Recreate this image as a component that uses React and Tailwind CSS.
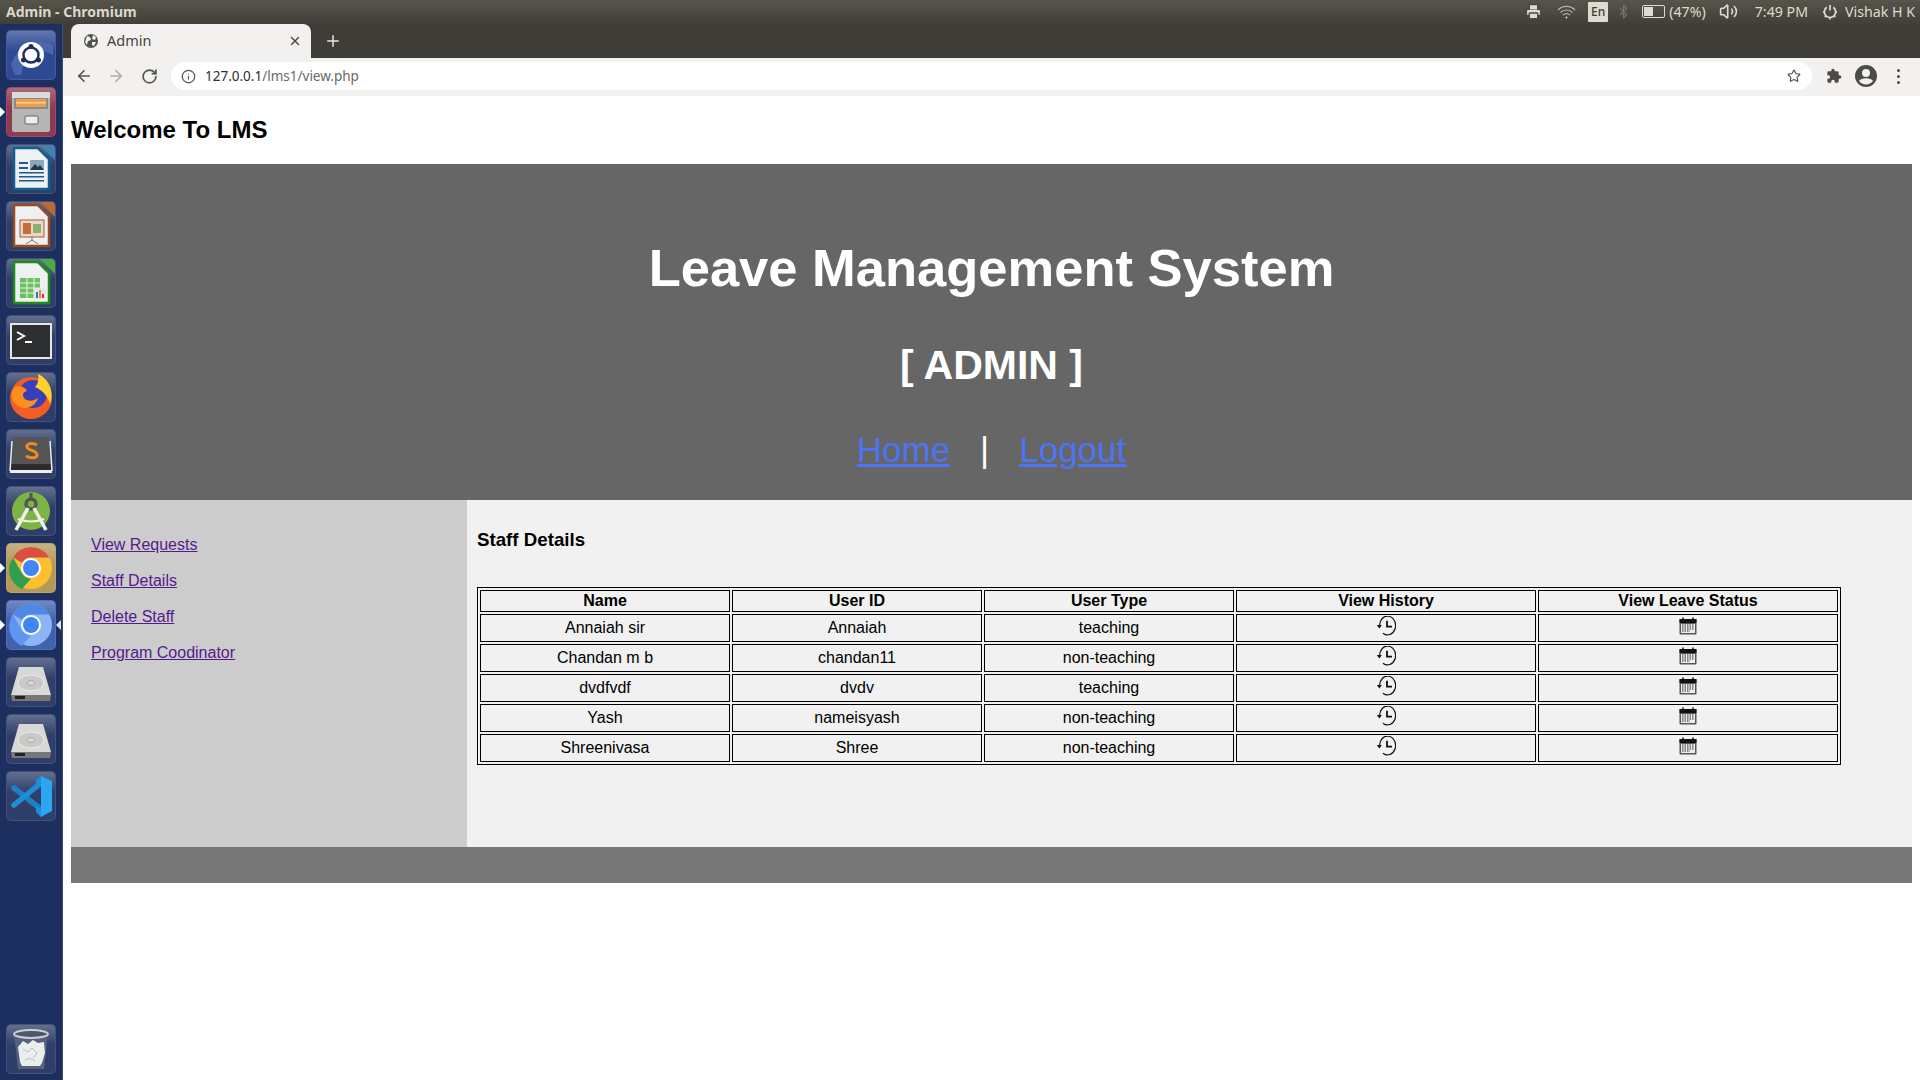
import React from 'react';
import { ArrowLeft, ArrowRight, RotateCw, Info, Star, X, Plus, Printer, Bluetooth, Volume2 } from 'lucide-react';

const SANS = 'font-["Liberation_Sans",Arial,sans-serif]';
const UI = 'font-["Noto_Sans",sans-serif]';

const STAFF = [
  { name: 'Annaiah sir', id: 'Annaiah', type: 'teaching' },
  { name: 'Chandan m b', id: 'chandan11', type: 'non-teaching' },
  { name: 'dvdfvdf', id: 'dvdv', type: 'teaching' },
  { name: 'Yash', id: 'nameisyash', type: 'non-teaching' },
  { name: 'Shreenivasa', id: 'Shree', type: 'non-teaching' }
];

const SIDE_LINKS = ['View Requests', 'Staff Details', 'Delete Staff', 'Program Coodinator'];

const Tile = ({ bg = 'bg-[#2f3f69]', marker, children }) => (
  <div className="relative w-full h-[50px] flex justify-center">
    {marker && <div className="absolute left-0 top-[20px] w-0 h-0 border-y-[5px] border-y-transparent border-l-[5px] border-l-white" />}
    {marker === 'both' && <div className="absolute right-[1px] top-[20px] w-0 h-0 border-y-[5px] border-y-transparent border-r-[5px] border-r-[#dfe3ec]" />}
    <div className={`relative w-[50px] h-[50px] rounded-[5px] border border-white/10 overflow-hidden ${bg}`}>
      <div className="absolute inset-x-0 top-0 h-[20px] bg-gradient-to-b from-white/25 to-transparent" />
      <svg width="48" height="48" viewBox="0 0 48 48" className="relative">{children}</svg>
    </div>
  </div>
);

const Disk = () => (
  <>
    <path d="M12 9h24l8 28H4z" fill="#d8d8d6" />
    <ellipse cx="24" cy="25" rx="13" ry="8" fill="#c9c9c7" stroke="#ecece9" />
    <ellipse cx="24" cy="25" rx="4" ry="2.500" fill="#d8d8d6" stroke="#aaa" />
    <path d="M4 37h40l-1 6H5z" fill="#77777a" />
    <path d="M8 38h10v3H8z" fill="#222" />
  </>
);

const Launcher = () => (
  <div className="w-[63px] shrink-0 bg-[#1c2f5e] border-r border-[#3a4a72] flex flex-col gap-[7px] pt-[6px] pb-[6px]">
    <Tile bg="bg-[#2f4a94]">
      <path d="M4 34C12 10 32 6 46 14v10C32 16 18 22 14 44H8z" fill="#4a66ad" />
      <circle cx="24" cy="24" r="13" fill="#fff" />
      <circle cx="24" cy="24" r="7.500" fill="none" stroke="#1f2f66" strokeWidth="2.500" />
      <circle cx="24" cy="15.500" r="2.500" fill="#1f2f66" />
      <circle cx="16.500" cy="29" r="2.500" fill="#1f2f66" />
      <circle cx="31.500" cy="29" r="2.500" fill="#1f2f66" />
    </Tile>
    <Tile bg="bg-[#8c3b50]" marker="left">
      <path d="M5 4h38v38a2 2 0 0 1-2 2H7a2 2 0 0 1-2-2z" fill="#b5b5b3" />
      <path d="M5 4h38v6H5z" fill="#dcdcdc" />
      <path d="M7 10h34v11H7z" fill="#8a8a88" />
      <path d="M9 11h30v8H9z" fill="#ee9b4c" />
      <path d="M9 14h30v1.500H9z" fill="#f8d49a" />
      <rect x="18" y="28" width="13" height="8" rx="1" fill="#eee" stroke="#666" />
    </Tile>
    <Tile>
      <path d="M7 3h24l11 11v30H7z" fill="#eef0f2" stroke="#10608f" strokeWidth="2.500" />
      <path d="M33 0h15v15z" fill="#3f83b5" />
      <path d="M12 17h9v2h-9zM12 22h9v2h-9zM12 27h25v1.500H12zM12 31h25v1.500H12zM12 35h25v1.500H12z" fill="#1b5c88" />
      <path d="M23 15h14v10H23z" fill="#8aa7bb" />
      <path d="M23 25l5-6 3 3 2-2 4 5z" fill="#26394a" />
    </Tile>
    <Tile>
      <path d="M7 3h24l11 11v30H7z" fill="#eef0f2" stroke="#9a4a1c" strokeWidth="2.500" />
      <path d="M33 0h15v15z" fill="#b96a38" />
      <rect x="13" y="18" width="24" height="17" fill="#e6d9cf" stroke="#b5562a" />
      <path d="M16 21h8v11h-8z" fill="#c86a3a" />
      <path d="M26 22h8v9h-8z" fill="#8fb06a" />
      <path d="M25 35v3l-6 4M25 38l6 4" stroke="#777" fill="none" />
    </Tile>
    <Tile>
      <path d="M7 3h24l11 11v30H7z" fill="#eef0f2" stroke="#1e8c14" strokeWidth="2.500" />
      <path d="M33 0h15v15z" fill="#4caa45" />
      <rect x="13" y="19" width="20" height="20" fill="#6cc060" />
      <path d="M13 24h20M13 29h20M13 34h20M20 19v20M27 19v20" stroke="#e9f5e6" />
      <rect x="27" y="29" width="12" height="11" fill="#e4e6ea" />
      <path d="M29 33h2v6h-2z" fill="#2f77b5" /><path d="M32 31h2v8h-2z" fill="#e58a2a" /><path d="M35 35h2v4h-2z" fill="#c33" />
    </Tile>
    <Tile>
      <rect x="3" y="7" width="42" height="36" fill="#e6e6e6" />
      <rect x="5" y="9" width="38" height="32" fill="#2e2f30" />
      <path d="M10 16l7 4-7 4" fill="none" stroke="#fff" strokeWidth="2" />
      <path d="M18 26h7" stroke="#fff" strokeWidth="2" />
    </Tile>
    <Tile>
      <circle cx="24" cy="25" r="21" fill="#f25c27" />
      <circle cx="26" cy="21" r="14" fill="#3b3fb6" />
      <path d="M31 1c13 6 16 20 12 30-3-9-8-14-15-17 3-3 4-8 3-13z" fill="#ffcf2e" />
      <path d="M8 14c5-2 10 0 12 4-4 1-5 4-3 7 3 4 10 3 14 0-2 8-12 13-20 8S3 20 8 14z" fill="#ff8f1f" />
    </Tile>
    <Tile>
      <path d="M7 7h34l3 27H4z" fill="#555" />
      <path d="M4 34h40v6H4z" fill="#2c2c2c" />
      <path d="M3 40h42v3H3z" fill="#eee" />
      <path d="M43 11l2 30M5 11L3 41" stroke="#eee" strokeWidth="1.500" />
      <path d="M30 15c-5-3-11-1-10 2 1 4 10 3 10 8 0 3-6 4-11 1" fill="none" stroke="#f58a1f" strokeWidth="3" />
    </Tile>
    <Tile>
      <circle cx="24" cy="24" r="19" fill="#7db545" />
      <circle cx="24" cy="17" r="5" fill="none" stroke="#555" strokeWidth="3.500" />
      <path d="M24 6v6" stroke="#555" strokeWidth="3" />
      <path d="M21 21L9 43M27 21l12 22" stroke="#eef0ea" strokeWidth="3.500" />
      <path d="M11 32c8 3 18 3 26 0" stroke="#eef0ea" strokeWidth="2" fill="none" />
    </Tile>
    <Tile bg="bg-[#b19a5c]" marker="left">
      <circle cx="24" cy="24" r="21" fill="#fbc02d" />
      <path d="M24 3a21 21 0 0 1 18.200 10.500H24a10.500 10.500 0 0 0-9.100 5.300L6 13.500A21 21 0 0 1 24 3z" fill="#d94f42" />
      <path d="M6 13.500l9 15.700a10.500 10.500 0 0 0 9 5.300L15 45A21 21 0 0 1 6 13.500z" fill="#2f9e4f" />
      <circle cx="24" cy="24" r="10" fill="#fff" />
      <circle cx="24" cy="24" r="8" fill="#4285f4" />
    </Tile>
    <Tile bg="bg-[#3f62ae]" marker="both">
      <circle cx="24" cy="24" r="21" fill="#8db4f5" />
      <path d="M24 3a21 21 0 0 1 18.200 10.500H24a10.500 10.500 0 0 0-9.100 5.300L6 13.500A21 21 0 0 1 24 3z" fill="#4f87e8" />
      <path d="M6 13.500l9 15.700a10.500 10.500 0 0 0 9 5.300L15 45A21 21 0 0 1 6 13.500z" fill="#5f95ee" />
      <circle cx="24" cy="24" r="10" fill="#fff" />
      <circle cx="24" cy="24" r="8" fill="#4285f4" />
    </Tile>
    <Tile><Disk /></Tile>
    <Tile><Disk /></Tile>
    <Tile>
      <path d="M7 16l28 22" stroke="#1f7fc4" strokeWidth="5.500" strokeLinecap="round" />
      <path d="M7 33L35 10" stroke="#1f8ed8" strokeWidth="5.500" strokeLinecap="round" />
      <path d="M34 4l11 5v30l-11 6z" fill="#2aa7f0" />
      <path d="M34 4l-5 4v6l5-3zM34 37l-5-3v6l5 5z" fill="#1f8ed8" />
    </Tile>
    <div className="mt-auto">
      <Tile>
        <path d="M7 9h34l-4 35H11z" fill="#55617f" />
        <ellipse cx="24" cy="9" rx="17" ry="4" fill="#4b5670" stroke="#cfcfcf" strokeWidth="2" />
        <path d="M11 22l5-6 5 3 5-4 5 3 6-1 1 11-3 10-2 3H15l-2-4z" fill="#eceded" />
        <path d="M16 24l5 3 4-4 5 5-4 5M18 35l5-2 5 3" fill="none" stroke="#b9bcc2" />
      </Tile>
    </div>
  </div>
);

const TopPanel = () => (
  <div className={`h-[24px] shrink-0 bg-gradient-to-b from-[#57544a] to-[#403f39] flex items-center justify-between pl-[6px] pr-[5px] pb-[1px] text-[14.200px] ${UI}`}>
    <span className="font-bold text-[14px] text-[#dcd7cc]">Admin - Chromium</span>
    <div className="flex items-center text-[#dfdbd2] h-full whitespace-nowrap">
      <Printer size={17} className="fill-[#dfdbd2] stroke-[#4a4841]" />
      <svg width="19" height="14" viewBox="0 0 19 14" fill="none" stroke="#b9b5ac" strokeWidth="1.200" className="ml-[15px]">
        <path d="M1 5a12 12 0 0 1 17 0M3.500 7.500a8.500 8.500 0 0 1 12 0M6 10a5 5 0 0 1 7 0" />
        <circle cx="9.500" cy="12.500" r="1" fill="#dfdbd2" stroke="none" />
      </svg>
      <span className="ml-[12px] w-[20px] h-[20px] bg-[#dfdbd2] rounded-[1px] text-[#3c3b37] text-[12px] flex items-center justify-center font-medium">En</span>
      <Bluetooth size={15} className="ml-[8px] text-[#77756d]" />
      <span className="ml-[11px] w-[23px] h-[13px] border border-[#dfdbd2] rounded-[2px] flex items-stretch p-[1px]">
        <span className="w-[9px] bg-[#dfdbd2]" />
      </span>
      <span className="ml-[4px]">(47%)</span>
      <Volume2 size={19} className="ml-[13px]" />
      <span className="ml-[17px]">7:49 PM</span>
      <svg width="16" height="16" viewBox="0 0 17 17" className="ml-[14px]" fill="none" stroke="#dfdbd2" strokeWidth="1.800">
        <path d="M8.500 1v6" />
        <path d="M5 3.500a6 6 0 1 0 7 0" />
        <path d="M1 8.500h2M14 8.500h2M3 14l1.500-1.500M14 14l-1.500-1.500M8.500 14.500v2" />
      </svg>
      <span className="ml-[7px]">Vishak H K</span>
    </div>
  </div>
);

const BrowserChrome = () => (
  <div className={`shrink-0 ${UI}`}>
    <div className="h-[34px] bg-[#3e3d37] flex items-end pl-[8px]">
      <div className="w-[240px] h-[34px] bg-[#f2f1f0] rounded-t-[8px] flex items-center pl-[12px] pr-[9px] text-[#45433f] text-[14.500px]">
        <svg width="16" height="16" viewBox="0 0 16 16">
          <circle cx="8" cy="8" r="7" fill="#55534f" />
          <path d="M4 3l3 1 1 3-3 1-1 4-2-3zM10 2l3 2-1 3-3-1zM9 9l4 0-2 4-2-1z" fill="#f2f1f0" />
        </svg>
        <span className="ml-[8px]">Admin</span>
        <X size={14} strokeWidth={2.500} className="ml-auto text-[#4a4845]" />
      </div>
      <Plus size={18} strokeWidth={2} className="ml-[13px] mb-[8px] text-[#e8e6e1]" />
    </div>
    <div className="h-[38px] bg-[#f2f1f0] flex items-center pl-[12px] pr-[20px] pb-[2px]">
      <ArrowLeft size={18} strokeWidth={2.200} className="text-[#55534f]" />
      <ArrowRight size={18} strokeWidth={2.200} className="text-[#adacaa] ml-[14px]" />
      <RotateCw size={17} strokeWidth={2.400} className="text-[#55534f] ml-[16px]" />
      <div className="ml-[13px] flex-1 h-[28px] bg-white rounded-full flex items-center pl-[10px] pr-[11px] text-[13.500px]">
        <Info size={15} className="text-[#55534f]" />
        <span className="ml-[9px] text-[#2f2e2b]">127.0.0.1<span className="text-[#6b6966]">/lms1/view.php</span></span>
        <Star size={14} className="ml-auto text-[#55534f]" />
      </div>
      <svg width="16" height="16" viewBox="0 0 24 24" fill="#4d4b47" className="ml-[14px]">
        <path d="M20.500 11H19V7a2 2 0 0 0-2-2h-4V3.500a2.500 2.500 0 0 0-5 0V5H4a2 2 0 0 0-2 2v3.800h1.500a2.700 2.700 0 0 1 0 5.400H2V20a2 2 0 0 0 2 2h3.800v-1.500a2.700 2.700 0 0 1 5.400 0V22H17a2 2 0 0 0 2-2v-4h1.500a2.500 2.500 0 0 0 0-5z" />
      </svg>
      <svg width="24" height="24" viewBox="0 0 24 24" fill="#4d4b47" className="ml-[12px]">
        <path d="M12 1a11 11 0 1 0 0 22 11 11 0 0 0 0-22zm0 4a4 4 0 1 1 0 8 4 4 0 0 1 0-8zm0 15.500a8.800 8.800 0 0 1-7-3.500c.8-1.800 4.200-2.800 7-2.800s6.200 1 7 2.800a8.800 8.800 0 0 1-7 3.500z" />
      </svg>
      <div className="ml-[19px] flex flex-col gap-[3px]">
        <span className="w-[3px] h-[3px] rounded-full bg-[#4d4b47]" />
        <span className="w-[3px] h-[3px] rounded-full bg-[#4d4b47]" />
        <span className="w-[3px] h-[3px] rounded-full bg-[#4d4b47]" />
      </div>
    </div>
  </div>
);

const HistoryIcon = () => (
  <svg width="20" height="20" viewBox="0 0 20 20" fill="none" stroke="#111" strokeWidth="1.200" className="mx-auto block">
    <path d="M3.600 10A8 9.400 0 1 1 7 17.200" />
    <path d="M0.800 9h5L3.400 12.500z" fill="#111" stroke="none" />
    <path d="M11 4.700v6h5" strokeWidth="1.800" />
  </svg>
);

const CalendarIcon = () => (
  <svg width="18" height="18" viewBox="0 0 18 18" className="mx-auto block">
    <rect x="0.500" y="2" width="17" height="15.500" rx="1" fill="#555" />
    <rect x="0.500" y="2" width="17" height="4" fill="#111" />
    <path d="M4 0.500v3M14 0.500v3" stroke="#111" strokeWidth="1.500" />
    <rect x="2" y="7" width="14" height="9" fill="#eee" />
    <path d="M3 8h12M3 10h12M3 12h12M3 14h8" stroke="#222" strokeWidth="1" strokeDasharray="1.500 1" />
  </svg>
);

const cell = 'border border-black p-[1px] text-center leading-[18px]';

const StaffTable = () => (
  <table className="w-[1364px] table-fixed border border-black border-separate border-spacing-[2px] text-black">
    <colgroup>
      <col className="w-[250px]" />
      <col className="w-[250px]" />
      <col className="w-[250px]" />
      <col className="w-[300px]" />
      <col />
    </colgroup>
    <thead>
      <tr className="h-[22px]">
        <th className={cell}>Name</th>
        <th className={cell}>User ID</th>
        <th className={cell}>User Type</th>
        <th className={cell}>View History</th>
        <th className={cell}>View Leave Status</th>
      </tr>
    </thead>
    <tbody>
      {STAFF.map(member => (
        <tr key={member.id} className="h-[28px]">
          <td className={cell}>{member.name}</td>
          <td className={cell}>{member.id}</td>
          <td className={cell}>{member.type}</td>
          <td className="border border-black text-center align-top pt-[1px]"><HistoryIcon /></td>
          <td className="border border-black text-center align-top pt-[2px]"><CalendarIcon /></td>
        </tr>
      ))}
    </tbody>
  </table>
);

const App = () => (
  <div className="h-screen w-full flex flex-col overflow-hidden bg-white">
    <TopPanel />
    <div className="flex-1 flex min-h-0">
      <Launcher />
      <div className={`flex-1 min-w-0 flex flex-col ${SANS}`}>
        <BrowserChrome />
        <div className="px-[8px] flex-1">
          <h2 className="text-[24px] leading-[28px] font-bold text-black mt-[20px] mb-[20px]">Welcome To LMS</h2>
          <div className="h-[336px] bg-[#666666] text-center text-white flex flex-col items-center">
            <h1 className="text-[52.500px] leading-[60px] font-bold mt-[74px]">Leave Management System</h1>
            <h2 className="text-[41px] leading-[46px] font-bold mt-[44px]">[ ADMIN ]</h2>
            <div className="text-[35px] leading-[42px] mt-[41px]">
              <a href="#home" className="text-[#4d74f5] underline">Home</a>
              <span className="mx-[30px]">|</span>
              <a href="#logout" className="text-[#4d74f5] underline">Logout</a>
            </div>
          </div>
          <div className="flex h-[347px]">
            <div className="w-[396px] shrink-0 bg-[#cccccc] pt-[36px] pl-[20px] flex flex-col gap-[18px]">
              {SIDE_LINKS.map(link => (
                <a key={link} href="#side" className="text-[16px] leading-[18px] text-[#551a8b] underline w-fit">{link}</a>
              ))}
            </div>
            <div className="flex-1 bg-[#f1f1f1] pl-[10px] pt-[29px]">
              <h3 className="text-[18.720px] leading-[22px] font-bold text-black mb-[36px]">Staff Details</h3>
              <StaffTable />
            </div>
          </div>
          <div className="h-[36px] bg-[#777777]" />
        </div>
      </div>
    </div>
  </div>
);

export default App;
